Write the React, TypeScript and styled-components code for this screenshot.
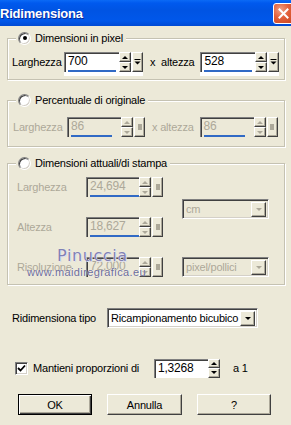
import React from 'react';
import styled, { createGlobalStyle } from 'styled-components';

const GlobalStyle = createGlobalStyle`
  html, body {
    margin: 0;
    padding: 0;
    background: #ece9d8;
  }
`;

const TEXT = '#000';
const GRAY = '#aca899';
const FACE = '#ece9d8';

const Window = styled.div`
  position: relative;
  width: 291px;
  height: 425px;
  overflow: hidden;
  display: flex;
  flex-direction: column;
  background: ${FACE};
  font-family: 'Liberation Sans', Arial, sans-serif;
  font-size: 11px;
  letter-spacing: -0.2px;
  color: ${TEXT};
`;

const TitleBar = styled.div`
  flex: none;
  height: 26px;
  display: flex;
  align-items: center;
  justify-content: space-between;
  background: linear-gradient(#0b6af6 0%, #0059ee 12%, #0054e3 40%, #0057ea 80%, #004ad4 100%);
`;

const Title = styled.span`
  color: #fff;
  font-weight: bold;
  font-size: 13px;
  letter-spacing: -0.2px;
  text-shadow: 1px 1px 0 #0a2a9a;
`;

const CloseButton = styled.div`
  width: 21px;
  height: 21px;
  box-sizing: border-box;
  margin-right: -3px;
  border: 1px solid #fff;
  border-radius: 3px;
  background: radial-gradient(circle at 35% 30%, #f0a086 0%, #e2603a 45%, #c84520 100%);
  display: flex;
  align-items: center;
  justify-content: center;
`;

const Body = styled.div`
  display: flex;
  flex-direction: column;
  padding: 5px 6px 0 7px;
`;

const Group = styled.fieldset<{ $top: number; $pt: number; $pb: number }>`
  margin: ${p => p.$top}px 0 0 0;
  padding: ${p => p.$pt}px 0 ${p => p.$pb}px 0;
  border: 1px solid #c5c2b2;
  box-shadow: 1px 1px 0 #fff, inset 1px 1px 0 #fff;
  min-width: 0;
`;

const Legend = styled.legend`
  margin-left: 8px;
  padding: 0 3px 0 2px;
  height: 14px;
  display: flex;
  align-items: center;
  gap: 4px;
  background: ${FACE};
`;

const RadioCircle = styled.span<{ $checked?: boolean }>`
  width: 13px;
  height: 13px;
  box-sizing: border-box;
  border-radius: 50%;
  background: #fff;
  border: 1px solid;
  border-color: #808080 #fff #fff #808080;
  box-shadow: inset 1px 1px 0 #404040, inset -1px -1px 0 #d4d0c8;
  display: flex;
  align-items: center;
  justify-content: center;

  &::after {
    content: '';
    width: 4px;
    height: 4px;
    border-radius: 50%;
    background: ${p => (p.$checked ? '#000' : 'transparent')};
  }
`;

const Row = styled.div<{ $pl: number }>`
  display: flex;
  align-items: flex-start;
  padding-left: ${p => p.$pl}px;
`;

const Label = styled.span<{ $w?: number; $disabled?: boolean }>`
  flex: none;
  width: ${p => (p.$w ? `${p.$w}px` : 'auto')};
  line-height: 20px;
  white-space: nowrap;
  color: ${p => (p.$disabled ? GRAY : TEXT)};
`;

const Between = styled(Label)`
  margin: 0 6px 0 7px;
`;

const Suffix = styled(Label)`
  margin-left: 13px;
`;

/* spin edit with the slider bar underneath */
const SpinFrame = styled.div<{ $disabled?: boolean; $strip?: boolean }>`
  flex: none;
  display: flex;
  align-items: flex-start;
  padding-bottom: ${p => (p.$strip ? 4 : 0)}px;
  background: ${p => (p.$disabled || !p.$strip ? 'transparent' : '#fff')};
`;

const Edit = styled.div<{ $w: number; $h: number; $disabled?: boolean }>`
  width: ${p => p.$w}px;
  height: ${p => p.$h}px;
  box-sizing: border-box;
  display: flex;
  flex-direction: column;
  background: ${p => (p.$disabled ? FACE : '#fff')};
  border-top: 1px solid #808080;
  border-left: 1px solid #808080;
  box-shadow: inset 1px 1px 0 #404040;
  color: ${p => (p.$disabled ? GRAY : TEXT)};
  font-size: 12px;
  line-height: 15px;
  padding: 1px 0 0 3px;
`;

const SliderBar = styled.div`
  margin-top: auto;
  height: 2px;
  background: #316ac5;
`;

const SpinColumn = styled.div<{ $h: number }>`
  display: flex;
  flex-direction: column;
  width: 12px;
  height: ${p => p.$h}px;
`;

const RaisedButton = styled.div`
  box-sizing: border-box;
  background: ${FACE};
  border: 1px solid;
  border-color: #fff #404040 #404040 #fff;
  box-shadow: inset -1px -1px 0 #aca899;
  display: flex;
  align-items: center;
  justify-content: center;
`;

const SpinButton = styled(RaisedButton)`
  flex: 1;
`;

const ExtraButton = styled(RaisedButton)<{ $h: number }>`
  width: 11px;
  height: ${p => p.$h}px;
  margin-left: 1px;
`;

const Arrow = styled.span<{ $up?: boolean; $disabled?: boolean }>`
  width: 0;
  height: 0;
  border-left: 3px solid transparent;
  border-right: 3px solid transparent;
  ${p =>
    p.$up
      ? `border-bottom: 3px solid ${p.$disabled ? GRAY : '#000'};`
      : `border-top: 3px solid ${p.$disabled ? GRAY : '#000'};`}
`;

const GraySquare = styled.span`
  width: 4px;
  height: 6px;
  background: ${GRAY};
`;

type SpinProps = {
  value: string;
  w: number;
  bar?: number;
  disabled?: boolean;
  extra?: boolean;
  h?: number;
};

const SpinField = ({ value, w, bar, disabled, extra = true, h = 20 }: SpinProps) => (
  <SpinFrame $disabled={disabled} $strip={extra}>
    <Edit $w={w} $h={h} $disabled={disabled}>
      <span>{value}</span>
      {bar ? <SliderBar style={{ width: bar }} /> : null}
    </Edit>
    <SpinColumn $h={h}>
      <SpinButton>
        <Arrow $up $disabled={disabled} />
      </SpinButton>
      <SpinButton>
        <Arrow $disabled={disabled} />
      </SpinButton>
    </SpinColumn>
    {extra && (
      <ExtraButton $h={h}>
        {disabled ? (
          <GraySquare />
        ) : (
          <svg width="7" height="7" viewBox="0 0 7 7">
            <rect x="0.5" y="0" width="6" height="1" fill="#000" />
            <path d="M0.5 2.5 H6.5 L3.5 5.5 Z" fill="#000" />
          </svg>
        )}
      </ExtraButton>
    )}
  </SpinFrame>
);

const SizeGrid = styled.div`
  display: grid;
  grid-template-columns: 69px 96px 87px;
  grid-template-rows: 24px 24px 24px;
  row-gap: 16px;
  padding-left: 9px;
`;

const Select = styled.div<{ $w: number; $disabled?: boolean }>`
  width: ${p => p.$w}px;
  height: 20px;
  box-sizing: border-box;
  display: flex;
  align-items: center;
  justify-content: space-between;
  background: ${p => (p.$disabled ? FACE : '#fff')};
  border: 1px solid;
  border-color: #808080 #fff #fff #808080;
  box-shadow: inset 1px 1px 0 #404040, inset -1px -1px 0 #d4d0c8;
  padding: 2px 2px 2px 3px;
  color: ${p => (p.$disabled ? GRAY : TEXT)};
  font-size: 11px;
  white-space: nowrap;
`;

const SelectButton = styled(RaisedButton)`
  flex: none;
  width: 15px;
  height: 15px;
`;

const GridSelect = styled.div<{ $row: string }>`
  grid-column: 3;
  grid-row: ${p => p.$row};
  align-self: ${p => (p.$row === '3' ? 'start' : 'center')};
`;

const TypeRow = styled.div`
  display: flex;
  align-items: center;
  margin-top: 23px;
  padding-left: 5px;
`;

const CheckRow = styled.div`
  display: flex;
  align-items: center;
  margin-top: 30px;
  padding-left: 8px;
`;

const CheckBox = styled.span`
  width: 13px;
  height: 13px;
  box-sizing: border-box;
  background: #fff;
  border: 1px solid;
  border-color: #808080 #fff #fff #808080;
  box-shadow: inset 1px 1px 0 #404040, inset -1px -1px 0 #d4d0c8;
  display: flex;
  align-items: center;
  justify-content: center;
  margin-right: 5px;
`;

const ButtonRow = styled.div`
  display: flex;
  gap: 15px;
  margin-top: 16px;
  padding-left: 11px;
`;

const PushButton = styled.div<{ $default?: boolean; $w: number }>`
  width: ${p => p.$w}px;
  height: 21px;
  box-sizing: border-box;
  display: flex;
  align-items: center;
  justify-content: center;
  background: ${FACE};
  border: 1px solid;
  border-color: ${p => (p.$default ? '#000' : '#fff #404040 #404040 #fff')};
  box-shadow: ${p =>
    p.$default
      ? 'inset 1px 1px 0 #fff, inset -1px -1px 0 #404040, inset -2px -2px 0 #aca899'
      : 'inset -1px -1px 0 #aca899'};
  font-size: 11px;
`;

const Watermark = styled.div`
  position: absolute;
  left: 27px;
  top: 246px;
  display: flex;
  flex-direction: column;
  pointer-events: none;
`;

const WatermarkName = styled.span`
  margin-left: 30px;
  font-family: 'DejaVu Sans', sans-serif;
  font-size: 16px;
  letter-spacing: 0.6px;
  line-height: 20px;
  color: #8181b3;
  text-shadow: 0 0 1px #fff, 1px 1px 0 #dcdcee;
`;

const WatermarkUrl = styled.span`
  font-family: 'Liberation Sans', Arial, sans-serif;
  font-size: 11px;
  letter-spacing: 0.4px;
  line-height: 12px;
  color: #6c6c98;
  text-shadow: 0 0 1px #fff;
`;

const CloseIcon = () => (
  <svg width="11" height="11" viewBox="0 0 11 11">
    <path d="M1.5 1.5 L9.5 9.5 M9.5 1.5 L1.5 9.5" stroke="#fff" strokeWidth="2" strokeLinecap="square" />
  </svg>
);

const CheckMark = () => (
  <svg width="9" height="9" viewBox="0 0 9 9">
    <path d="M1 4 L3.5 6.5 L8 1.5" stroke="#000" strokeWidth="1.8" fill="none" />
  </svg>
);

export default function App() {
  return (
    <Window>
      <GlobalStyle />
      <TitleBar>
        <Title>Ridimensiona</Title>
        <CloseButton>
          <CloseIcon />
        </CloseButton>
      </TitleBar>

      <Body>
        <Group $top={0} $pt={7} $pb={3}>
          <Legend>
            <RadioCircle $checked />
            <span>Dimensioni in pixel</span>
          </Legend>
          <Row $pl={4}>
            <Label $w={52}>Larghezza</Label>
            <SpinField value="700" w={55} bar={48} />
            <Between>x&nbsp; altezza</Between>
            <SpinField value="528" w={55} bar={48} />
          </Row>
        </Group>

        <Group $top={13} $pt={10} $pb={5}>
          <Legend>
            <RadioCircle />
            <span>Percentuale di originale</span>
          </Legend>
          <Row $pl={5}>
            <Label $w={54} $disabled>
              Larghezza
            </Label>
            <SpinField value="86" w={54} bar={41} disabled />
            <Between $disabled>x altezza</Between>
            <SpinField value="86" w={54} bar={41} disabled />
          </Row>
        </Group>

        <Group $top={9} $pt={7} $pb={3}>
          <Legend>
            <RadioCircle />
            <span>Dimensioni attuali/di stampa</span>
          </Legend>
          <SizeGrid>
            <Label $disabled>Larghezza</Label>
            <SpinField value="24,694" w={53} bar={50} disabled />
            <GridSelect $row="1 / span 2">
              <Select $w={87} $disabled>
                <span>cm</span>
                <SelectButton>
                  <Arrow $disabled />
                </SelectButton>
              </Select>
            </GridSelect>
            <Label $disabled>Altezza</Label>
            <SpinField value="18,627" w={53} bar={50} disabled />
            <Label $disabled>Risoluzione</Label>
            <SpinField value="72,000" w={53} disabled />
            <GridSelect $row="3">
              <Select $w={87} $disabled>
                <span>pixel/pollici</span>
                <SelectButton>
                  <Arrow $disabled />
                </SelectButton>
              </Select>
            </GridSelect>
          </SizeGrid>
        </Group>

        <TypeRow>
          <Label $w={95}>Ridimensiona tipo</Label>
          <Select $w={151}>
            <span>Ricampionamento bicubico</span>
            <SelectButton>
              <Arrow />
            </SelectButton>
          </Select>
        </TypeRow>

        <CheckRow>
          <CheckBox>
            <CheckMark />
          </CheckBox>
          <Label $w={121}>Mantieni proporzioni di</Label>
          <SpinField value="1,3268" w={54} extra={false} h={19} />
          <Suffix>a 1</Suffix>
        </CheckRow>

        <ButtonRow>
          <PushButton $default $w={74}>
            OK
          </PushButton>
          <PushButton $w={75}>Annulla</PushButton>
          <PushButton $w={74}>?</PushButton>
        </ButtonRow>
      </Body>

      <Watermark>
        <WatermarkName>Pinuccia</WatermarkName>
        <WatermarkUrl>www.maidiregrafica.eu</WatermarkUrl>
      </Watermark>
    </Window>
  );
}
